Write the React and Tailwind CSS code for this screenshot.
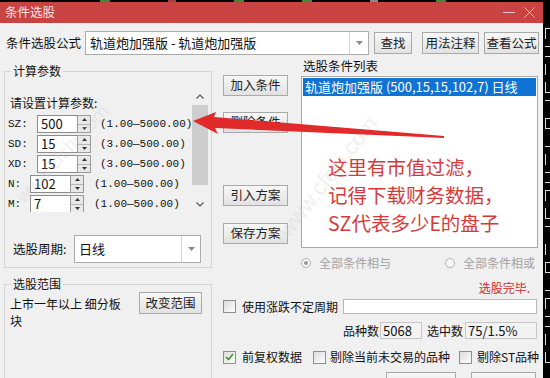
import React from 'react';

const CJK = "font-['Noto_Sans_CJK_SC','Noto_Sans',sans-serif]";
const MONO = "font-['Liberation_Mono','Noto_Sans_CJK_SC',monospace]";

function Btn({ children, className = '' }) {
  return (
    <div
      className={`flex items-center justify-center border border-[#a9a9a9] bg-gradient-to-b from-[#f7f7f7] to-[#e2e2e2] text-[12.5px] text-[#222] ${className}`}
    >
      {children}
    </div>
  );
}

function Combo({ value, className = '' }) {
  return (
    <div className={`flex items-stretch bg-white border border-[#acacac] ${className}`}>
      <div className="flex-1 flex items-center pl-[4px] text-[13px] text-[#111]">{value}</div>
      <div className="w-[19px] border-l border-[#d4d4d4] flex items-center justify-center">
        <svg width="7" height="4" viewBox="0 0 7 4">
          <path d="M0 0 L7 0 L3.5 4 Z" fill="#8a8a8a" />
        </svg>
      </div>
    </div>
  );
}

function Spin({ label, labelW, value, range, gap }) {
  return (
    <div className="flex items-center h-[20px]">
      <span className={`${MONO} text-[11px] text-[#111] ${labelW}`}>{label}</span>
      <div className="w-[40px] h-[18px] bg-white border border-[#8c8c8c] border-r-0 pl-[3px] text-[13px] leading-[16px] text-[#111]">
        {value}
      </div>
      <div className="w-[14px] h-[18px] flex flex-col border border-[#9a9a9a] bg-[#e9e9e9]">
        <div className="flex-1 flex items-center justify-center border-b border-[#b5b5b5]">
          <svg width="5" height="3" viewBox="0 0 5 3"><path d="M0 3 L5 3 L2.5 0 Z" fill="#333" /></svg>
        </div>
        <div className="flex-1 flex items-center justify-center">
          <svg width="5" height="3" viewBox="0 0 5 3"><path d="M0 0 L5 0 L2.5 3 Z" fill="#333" /></svg>
        </div>
      </div>
      <span className={`${MONO} text-[11px] text-[#111] whitespace-nowrap ${gap}`}>{range}</span>
    </div>
  );
}

function Check({ checked, className = '' }) {
  return (
    <div
      className={`w-[13px] h-[13px] shrink-0 border border-[#8e8f8f] bg-gradient-to-br from-[#dcdcdc] to-white flex items-center justify-center ${className}`}
    >
      {checked && (
        <svg width="9" height="8" viewBox="0 0 9 8">
          <path d="M1 4 L3.5 6.5 L8 1" stroke="#3a9a2a" strokeWidth="1.6" fill="none" />
        </svg>
      )}
    </div>
  );
}

function Radio({ on }) {
  return (
    <div className="w-[10px] h-[10px] shrink-0 rounded-full border border-[#b4b4b4] bg-[#f6f6f6] flex items-center justify-center">
      {on && <div className="w-[4px] h-[4px] rounded-full bg-[#9a9a9a]" />}
    </div>
  );
}

// fragments of the glyphs of the app behind, cut by the dialog edge
const EDGE = [
  'border-l border-t', 'border-t border-b', 'border-l', 'border-l border-b', 'border-t',
  'border-l border-t border-b', 'border-b', 'border-l', 'border-t border-b', 'border-l border-t',
  'border-l border-b', 'border-t', 'border-l', 'border-l border-t border-b', 'border-b',
  'border-l border-t', 'border-t border-b', 'border-l', 'border-l border-b',
];

export default function App() {
  return (
    <div className={`relative w-[550px] h-[378px] overflow-hidden bg-black ${CJK}`}>
      {/* strip of the app behind */}
      <div className="h-[2px] flex gap-[58px] pl-[100px]">
        <span className="w-[10px] bg-[#3a8a3a]" />
        <span className="w-[8px] bg-[#a04040]" />
        <span className="w-[10px] bg-[#3a8a3a]" />
        <span className="w-[10px] bg-[#3a8a3a]" />
        <span className="w-[8px] bg-[#888]" />
        <span className="w-[10px] bg-[#3a8a3a]" />
      </div>

      <div className="flex">
        {/* dialog */}
        <div className="w-[543px] h-[376px] bg-[#f0f0f0] flex flex-col">
          {/* title */}
          <div className="h-[21px] shrink-0 bg-[#c94343] flex items-center pl-[5px] pr-[8px]">
            <span className="text-[12.5px] text-[#fbe6e6]">条件选股</span>
            <div className="ml-auto flex items-center gap-[9px]">
              <div className="w-[12px] h-[1px] bg-[#f2c6c6]" />
              <svg width="11" height="11" viewBox="0 0 11 11">
                <path d="M0.5 0.5 L10.5 10.5 M10.5 0.5 L0.5 10.5" stroke="#f2c6c6" strokeWidth="1" />
              </svg>
            </div>
          </div>

          {/* formula row */}
          <div className="flex items-center h-[24px] mt-[8px] text-[12.5px] text-[#111]">
            <span className="ml-[6px] w-[79px]">条件选股公式</span>
            <Combo value="轨道炮加强版 - 轨道炮加强版" className="w-[284px] h-[24px]" />
            <Btn className="ml-[5px] w-[38px] h-[22px]">查找</Btn>
            <Btn className="ml-[10px] w-[57px] h-[22px]">用法注释</Btn>
            <Btn className="ml-[5px] w-[55px] h-[22px]">查看公式</Btn>
          </div>

          <div className="flex mt-[3px] text-[12px] text-[#111]">
            {/* left column */}
            <div className="ml-[4px] w-[208px] flex flex-col">
              <fieldset className="mt-[5px] border border-[#d5d5d5] pl-[1px] pr-[3px] pb-[4px]">
                <legend className="ml-[5px] px-[2px] leading-[16px]">计算参数</legend>
                <div className="mt-[9px] h-[124px] flex">
                  <div className="flex-1 overflow-hidden">
                    <div className="mt-[7px] pl-[4px] leading-[16px]">请设置计算参数:</div>
                    <div className="mt-[3px] pl-[2px] flex flex-col">
                      <Spin label="SZ:" labelW="w-[29px]" value="500" range="(1.00—5000.00)" gap="ml-[9px]" />
                      <Spin label="SD:" labelW="w-[29px]" value="15" range="(3.00—500.00)" gap="ml-[9px]" />
                      <Spin label="XD:" labelW="w-[29px]" value="15" range="(3.00—500.00)" gap="ml-[9px]" />
                      <Spin label="N:" labelW="w-[22px]" value="102" range="(1.00—500.00)" gap="ml-[10px]" />
                      <Spin label="M:" labelW="w-[22px]" value="7" range="(1.00—500.00)" gap="ml-[10px]" />
                    </div>
                  </div>
                  <div className="w-[16px] flex flex-col">
                    <div className="h-[17px] flex items-center justify-center">
                      <svg width="8" height="5" viewBox="0 0 8 5"><path d="M0.5 4.5 L4 1 L7.5 4.5" stroke="#555" strokeWidth="1.2" fill="none" /></svg>
                    </div>
                    <div className="h-[80px] bg-[#cdcdcd]" />
                    <div className="flex-1 flex items-end justify-center pb-[5px]">
                      <svg width="8" height="5" viewBox="0 0 8 5"><path d="M0.5 0.5 L4 4 L7.5 0.5" stroke="#555" strokeWidth="1.2" fill="none" /></svg>
                    </div>
                  </div>
                </div>
                <div className="mt-[23px] flex items-center pl-[7px]">
                  <span className="w-[61px] text-[12.5px]">选股周期:</span>
                  <Combo value="日线" className="w-[127px] h-[28px]" />
                </div>
              </fieldset>

              <fieldset className="mt-[8px] h-[130px] border border-[#d5d5d5] pl-[1px] pr-[3px]">
                <legend className="ml-[5px] px-[2px] leading-[16px]">选股范围</legend>
                <div className="flex">
                  <div className="w-[133px] pl-[4px] mt-[3px] leading-[17px]">
                    上市一年以上 细分板
                    <br />块
                  </div>
                  <Btn className="w-[63px] h-[22px]">改变范围</Btn>
                </div>
              </fieldset>
            </div>

            {/* right part */}
            <div className="flex-1 flex flex-col">
              <div className="flex">
                <div className="ml-[11px] w-[65px] flex flex-col">
                  <Btn className="mt-[17px] h-[21px]">加入条件</Btn>
                  <Btn className="mt-[16px] h-[21px]">删除条件</Btn>
                  <Btn className="mt-[52px] h-[21px]">引入方案</Btn>
                  <Btn className="mt-[17px] h-[21px]">保存方案</Btn>
                </div>
                <div className="ml-[13px] w-[237px] flex flex-col">
                  <div className="pl-[2px] leading-[16px] text-[12.5px]">选股条件列表</div>
                  <div className="mt-[2px] h-[172px] bg-white border border-[#a9a9a9] p-[1px] flex flex-col">
                    <div className="h-[18px] bg-[#0f73d3] text-white text-[13px] leading-[18px] pl-[2px] whitespace-nowrap">
                      轨道炮加强版 (500,15,15,102,7) 日线
                    </div>
                    <div className="mt-[57px] pl-[25px] text-[19.5px] leading-[28px] text-[#d33b3b] whitespace-nowrap">
                      <div>这里有市值过滤，</div>
                      <div>记得下载财务数据，</div>
                      <div>SZ代表多少E的盘子</div>
                    </div>
                  </div>
                </div>
              </div>

              <div className="mt-[7px] h-[16px] flex items-center text-[#a3a3a3]">
                <div className="ml-[89px]"><Radio on /></div>
                <span className="ml-[8px] w-[126px]">全部条件相与</span>
                <Radio />
                <span className="ml-[8px]">全部条件相或</span>
              </div>

              <div className="mt-[8px] h-[16px] text-right pr-[13px] text-[#d32a2a]">选股完毕.</div>

              <div className="mt-[4px] h-[15px] flex items-center">
                <Check className="ml-[11px]" />
                <span className="ml-[6px] w-[95px] whitespace-nowrap">使用涨跌不定周期</span>
                <div className="ml-[6px] w-[194px] h-[15px] bg-white border border-[#b8b8b8]" />
              </div>

              <div className="mt-[8px] h-[17px] flex items-center">
                <span className="ml-[131px] w-[37px] whitespace-nowrap">品种数</span>
                <div className="w-[42px] h-[17px] border border-[#c6c6c6] bg-[#f3f3f3] pl-[2px] text-[13px] leading-[15px]">5068</div>
                <span className="ml-[5px] w-[38px] whitespace-nowrap">选中数</span>
                <div className="w-[72px] h-[17px] border border-[#c6c6c6] bg-[#f3f3f3] pl-[2px] text-[13px] leading-[15px]">75/1.5%</div>
              </div>

              <div className="mt-[11px] h-[14px] flex items-center whitespace-nowrap">
                <Check checked className="ml-[11px]" />
                <span className="ml-[6px] w-[65px]">前复权数据</span>
                <Check className="ml-[6px]" />
                <span className="ml-[4px] w-[125px]">剔除当前未交易的品种</span>
                <Check className="ml-[4px]" />
                <span className="ml-[5px]">剔除ST品种</span>
              </div>

              <div className="mt-[8px] flex">
                <Btn className="ml-[174px] w-[70px] h-[22px]" />
                <Btn className="ml-[15px] w-[65px] h-[22px]" />
              </div>
            </div>
          </div>
        </div>

        {/* black strip to the right */}
        <div className="w-[7px] h-[376px] overflow-hidden flex flex-col pt-[26px] gap-[7px]">
          {EDGE.map((b, i) => (
            <div key={i} className={`ml-[2px] w-[6px] h-[11px] shrink-0 border-[#dcdcdc] ${b}`} />
          ))}
        </div>
      </div>

      {/* watermarks */}
      <span className="absolute left-[0px] top-[140px] -rotate-[47deg] text-[19px] text-[#c9c9c9]/30 font-['Liberation_Sans',sans-serif]">
        www.cfchi.com
      </span>
      <span className="absolute left-[255px] top-[160px] -rotate-[52deg] text-[22px] text-[#c9c9c9]/30 font-['Liberation_Sans',sans-serif]">
        www.cfchi.com
      </span>

      {/* annotation arrow */}
      <svg className="absolute left-0 top-0" width="550" height="378" viewBox="0 0 550 378">
        <polygon
          points="193,121 216,112 214,117 444,136 444,138 215,128 218,134"
          fill="#e12a2a"
        />
      </svg>
    </div>
  );
}
